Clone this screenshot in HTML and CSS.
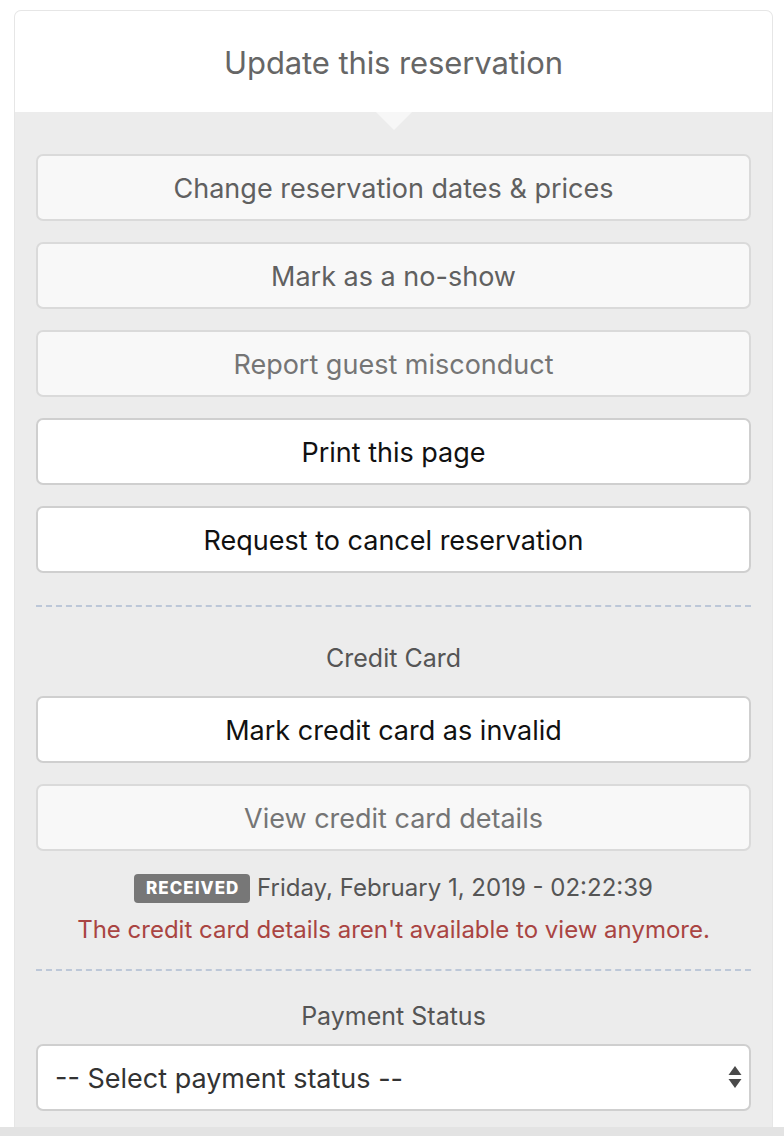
FILE: index.html
```html
<!DOCTYPE html>
<html>
<head>
<meta charset="utf-8">
<link rel="stylesheet" href="styles.css">
</head>
<body>
<div class="panel">
  <div class="panel-head">
    <h2 class="title">Update this reservation</h2>
    <span class="notch"></span>
  </div>
  <div class="panel-body">
    <button class="btn btn-disabled dark">Change reservation dates &amp; prices</button>
    <button class="btn btn-disabled dark">Mark as a no-show</button>
    <button class="btn btn-disabled">Report guest misconduct</button>
    <button class="btn">Print this page</button>
    <button class="btn">Request to cancel reservation</button>

    <hr class="divider divider-first">

    <div class="section-label">Credit Card</div>
    <button class="btn">Mark credit card as invalid</button>
    <button class="btn btn-disabled">View credit card details</button>
    <div class="received-line"><span class="badge">RECEIVED</span> Friday, February 1, 2019 - 02:22:39</div>
    <div class="error-text">The credit card details aren't available to view anymore.</div>

    <hr class="divider divider-second">

    <div class="section-label label-tight">Payment Status</div>
    <div class="select-wrap">
      <select class="select">
        <option>-- Select payment status --</option>
      </select>
      <svg class="select-arrows" width="14" height="24" viewBox="0 0 14 24"><path d="M7 1 L13.5 10 L0.5 10 Z" fill="#4a4a4a"/><path d="M0.5 14 L13.5 14 L7 23 Z" fill="#4a4a4a"/></svg>
    </div>
  </div>
</div>
<div class="bottom-strip"></div>
</body>
</html>
```

FILE: styles.css
```css
html, body {
  margin: 0;
  padding: 0;
  background: #ffffff;
}

body {
  font-family: "Inter", "Liberation Sans", sans-serif;
  padding-top: 10px;
}

.panel {
  margin: 0 11px 0 14px;
  border: 1px solid #e6e6e6;
  border-bottom: none;
  border-radius: 7px 7px 0 0;
  overflow: hidden;
  background: #ececec;
}

.panel-head {
  position: relative;
  background: #ffffff;
  height: 101px;
  display: flex;
  align-items: center;
  justify-content: center;
}

.title {
  margin: 0;
  font-weight: 400;
  font-size: 31px;
  color: #666666;
  letter-spacing: -0.1px;
  padding-top: 2px;
}

.notch {
  position: absolute;
  left: 50%;
  bottom: -18px;
  margin-left: -18px;
  width: 0;
  height: 0;
  border-left: 18px solid transparent;
  border-right: 18px solid transparent;
  border-top: 18px solid #f7f7f7;
  z-index: 2;
}

.panel-body {
  padding: 42px 21px 16px;
  display: flex;
  flex-direction: column;
}

.btn {
  display: block;
  width: 100%;
  height: 67px;
  margin: 0 0 21px;
  background: #ffffff;
  border: 2px solid #cfcfcf;
  border-radius: 7px;
  font-family: inherit;
  font-size: 27px;
  color: #111111;
  text-align: center;
  padding: 2px 10px 0;
}

.btn-disabled {
  background: #f8f8f8;
  border-color: #dadada;
  color: #757575;
}

.btn-disabled.dark {
  color: #606060;
}

.divider {
  width: 100%;
  border: none;
  border-top: 2px dashed #bcc7d8;
  margin: 0;
}

.divider-first {
  margin-top: 11px;
}

.divider-second {
  margin-top: 22px;
}

.section-label {
  text-align: center;
  font-size: 25px;
  color: #555555;
  line-height: 34px;
  margin: 34px 0 21px;
}

.label-tight {
  margin: 28px 0 11px;
}

.received-line {
  text-align: center;
  font-size: 24px;
  color: #555555;
  line-height: 34px;
  height: 34px;
  margin-top: -1px;
}

.badge {
  display: inline-block;
  background: #777777;
  color: #ffffff;
  font-weight: 800;
  font-size: 17px;
  letter-spacing: 1px;
  line-height: 29px;
  padding: 0 11px 0 12px;
  border-radius: 4px;
  vertical-align: 2px;
}

.error-text {
  text-align: center;
  font-size: 24px;
  color: #a94442;
  line-height: 34px;
  margin-top: 8px;
}

.select-wrap {
  position: relative;
}

.select {
  appearance: none;
  -webkit-appearance: none;
  display: block;
  width: 100%;
  height: 67px;
  background: #ffffff;
  border: 2px solid #cfcfcf;
  border-radius: 7px;
  font-family: inherit;
  font-size: 27px;
  color: #333333;
  padding: 2px 17px 0;
}

.select-arrows {
  position: absolute;
  right: 9px;
  top: 21px;
}

.bottom-strip {
  height: 40px;
  background: #e3e3e3;
}
```
